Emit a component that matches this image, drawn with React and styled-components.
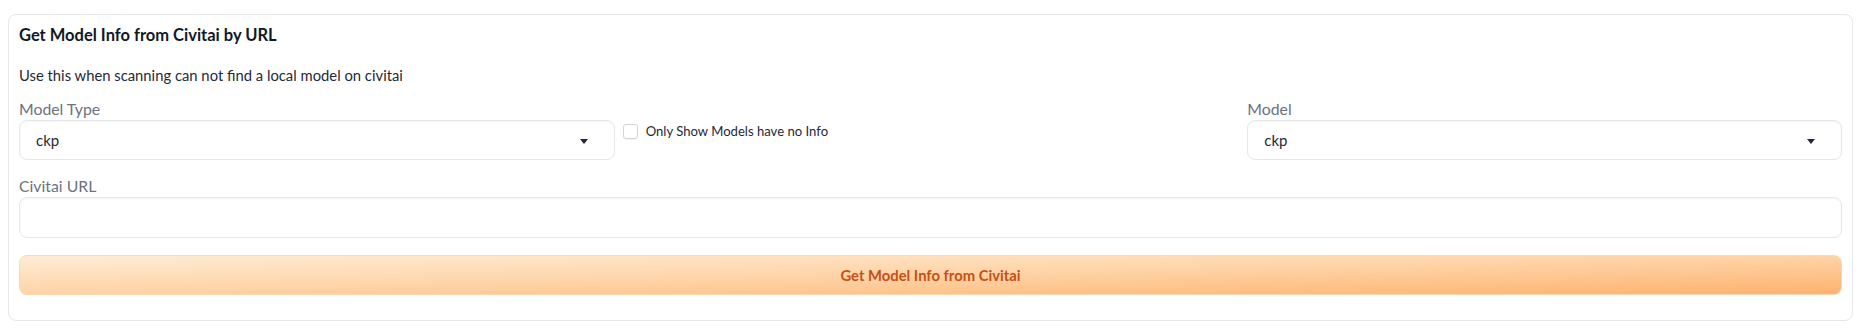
import React, { useState } from 'react';
import styled, { createGlobalStyle } from 'styled-components';

const GlobalStyle = createGlobalStyle`
  body {
    margin: 0;
    background: #ffffff;
    font-family: Lato, "Noto Sans", sans-serif;
    color: #1f2937;
  }
`;

const Panel = styled.div`
  margin: 14px 7px 0 8px;
  height: 307px;
  box-sizing: border-box;
  border: 1px solid #e5e7eb;
  border-radius: 8px;
  background: #ffffff;
  padding: 0 10px;
  display: flex;
  flex-direction: column;
`;

const Title = styled.h2`
  margin: 10px 0 0;
  font-size: 16.5px;
  line-height: 20px;
  font-weight: 700;
  color: #111827;
`;

const Description = styled.p`
  margin: 20px 0 0;
  font-size: 14.8px;
  line-height: 20px;
  color: #1f2937;
`;

const Row = styled.div`
  display: grid;
  grid-template-columns: 596fr 617fr 595fr;
  gap: 8px;
  margin-top: 15px;
`;

const Field = styled.div`
  display: flex;
  flex-direction: column;
  margin-top: ${p => p.$top || 0}px;
`;

const Label = styled.label`
  font-size: 15.8px;
  line-height: 18px;
  color: #6b7280;
  margin-bottom: 2px;
`;

const SelectBox = styled.div`
  height: 40px;
  box-sizing: border-box;
  border: 1px solid #e5e7eb;
  border-radius: 8px;
  box-shadow: 0 1px 2px rgba(0, 0, 0, 0.04) inset;
  display: flex;
  align-items: center;
  justify-content: space-between;
  padding: 0 26px 0 16px;
  font-size: 15px;
  color: #1f2937;
  background: #ffffff;
`;

const Arrow = styled.span`
  width: 0;
  height: 0;
  border-left: 4px solid transparent;
  border-right: 4px solid transparent;
  border-top: 5px solid #1f2937;
  margin-top: 2px;
`;

const CheckRow = styled.label`
  display: flex;
  align-items: center;
  gap: 8px;
  margin-top: 22px;
  height: 18px;
  font-size: 13.1px;
  color: #1f2937;
  cursor: pointer;
`;

const Check = styled.span`
  width: 15px;
  height: 15px;
  box-sizing: border-box;
  border: 1px solid #d1d5db;
  border-radius: 3px;
  background: ${p => (p.$on ? '#f97316' : '#ffffff')};
  box-shadow: 0 1px 1px rgba(0, 0, 0, 0.05);
`;

const Input = styled.input`
  height: 41px;
  box-sizing: border-box;
  border: 1px solid #e5e7eb;
  border-radius: 8px;
  box-shadow: 0 1px 2px rgba(0, 0, 0, 0.04) inset;
  padding: 0 16px;
  font-size: 15px;
  font-family: inherit;
  outline: none;
`;

const Button = styled.button`
  margin-top: 17px;
  height: 40px;
  border: 1px solid #fed7aa;
  border-radius: 8px;
  background: linear-gradient(to bottom right, #ffecd6 0%, #fed3a6 50%, #fdb26f 100%);
  color: #c84f15;
  font-family: inherit;
  font-size: 14.8px;
  font-weight: 700;
  cursor: pointer;
`;

const Select = ({ value }) => (
  <SelectBox>
    <span>{value}</span>
    <Arrow />
  </SelectBox>
);

const App = () => {
  const [onlyNoInfo, setOnlyNoInfo] = useState(false);

  return (
    <>
      <GlobalStyle />
      <Panel>
        <Title>Get Model Info from Civitai by URL</Title>
        <Description>Use this when scanning can not find a local model on civitai</Description>
        <Row>
          <Field>
            <Label>Model Type</Label>
            <Select value="ckp" />
          </Field>
          <Field>
            <CheckRow onClick={() => setOnlyNoInfo(!onlyNoInfo)}>
              <Check $on={onlyNoInfo} />
              Only Show Models have no Info
            </CheckRow>
          </Field>
          <Field>
            <Label>Model</Label>
            <Select value="ckp" />
          </Field>
        </Row>
        <Field $top={17}>
          <Label>Civitai URL</Label>
          <Input type="text" />
        </Field>
        <Button>Get Model Info from Civitai</Button>
      </Panel>
    </>
  );
};

export default App;
